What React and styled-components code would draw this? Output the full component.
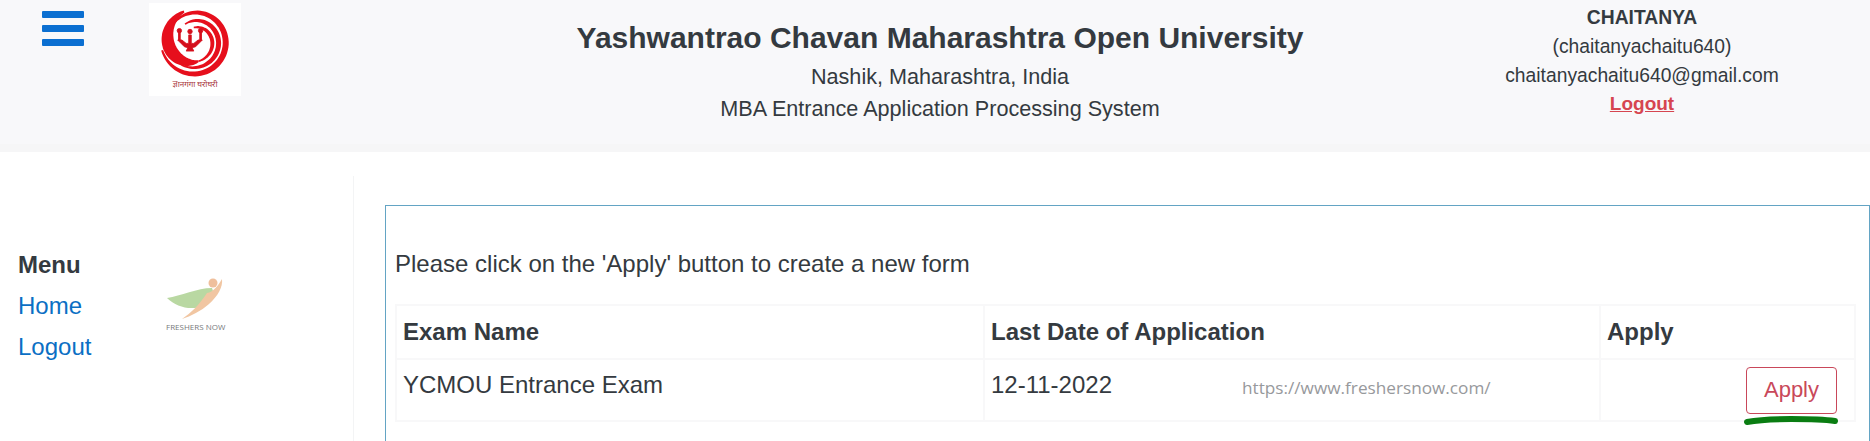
import React from "react";
import styled, { createGlobalStyle } from "styled-components";

const GlobalStyle = createGlobalStyle`
  html, body {
    margin: 0;
    height: 441px;
    overflow: hidden;
    background: #fff;
    font-family: "Liberation Sans", Arial, sans-serif;
    color: #343a40;
  }
`;

// tapered band along a spiral, angles in degrees clockwise from straight up
const ribbon = (a0, a1, r0, r1, w0, w1) => {
  const outer = [];
  const inner = [];
  for (let i = 0; i <= 60; i++) {
    const t = i / 60;
    const a = ((a0 + (a1 - a0) * t) * Math.PI) / 180;
    const r = r0 + (r1 - r0) * t;
    const w = (w0 + (w1 - w0) * Math.sin(Math.PI * t)) / 2;
    const x = Math.sin(a);
    const y = -Math.cos(a);
    outer.push(`${(46 + x * (r + w)).toFixed(1)} ${(38.5 + y * (r + w)).toFixed(1)}`);
    inner.unshift(`${(46 + x * (r - w)).toFixed(1)} ${(38.5 + y * (r - w)).toFixed(1)}`);
  }
  return `M${outer.join("L")}L${inner.join("L")}Z`;
};

const YcmouLogo = () => (
  <LogoBox>
    <svg width="92" height="93" viewBox="0 0 92 93">
      <g fill="#e60f1c">
        <path d={ribbon(-45, 255, 28, 34, 2, 6)} />
        <path d={ribbon(-30, 210, 20, 27, 1.5, 5)} />
        <path d={ribbon(-5, 170, 14, 20, 1.5, 4)} />
        <path d={ribbon(170, 340, 20, 32, 2, 13)} />
      </g>
      <g fill="#d40f1c" stroke="#d40f1c" strokeWidth="1" transform="translate(41 37) scale(.85) translate(-45.5 -37)">
        <path d="M31 37 L36 37 L41 41 L44 41 L44 31 L47 31 L47 41 L50 41 L55 37 L60 37 L52 45 L48 46 L50 50 L41 50 L43 46 L39 45 Z" />
        <rect x="32" y="28" width="2" height="9" />
        <rect x="57" y="28" width="2" height="9" />
        <circle cx="33" cy="26" r="2.6" />
        <circle cx="45.5" cy="27" r="2.6" />
        <circle cx="58" cy="26" r="2.6" />
      </g>
      <text x="46" y="84" textAnchor="middle" fontFamily="Noto Sans" fontSize="8" fill="#a8343a">
        ज्ञानगंगा घरोघरी
      </text>
    </svg>
  </LogoBox>
);

const FreshersLogo = () => (
  <FreshersBox>
    <svg width="58" height="47" viewBox="0 0 58 47">
      <circle cx="46" cy="10" r="4.5" fill="#efbf9c" />
      <path d="M0 25 C14 23 30 15 45 15 C48 21 44 28 38 32 C26 38 10 35 0 25 Z" fill="#b9d8a2" />
      <path d="M55 6 C56 14 51 23 42 31 C34 38 24 43 15 46 C24 40 33 31 40 20 C46 19 51 13 55 6 Z" fill="#f1c6a2" />
    </svg>
    <FreshersName>FRESHERS NOW</FreshersName>
  </FreshersBox>
);

const App = () => (
  <>
    <GlobalStyle />
    <Header>
      <Burger aria-label="Menu">
        <span />
        <span />
        <span />
      </Burger>
      <YcmouLogo />
      <Heading>
        <Title>Yashwantrao Chavan Maharashtra Open University</Title>
        <SubTitle>Nashik, Maharashtra, India</SubTitle>
        <SubTitle>MBA Entrance Application Processing System</SubTitle>
      </Heading>
      <UserBox>
        <UserName>CHAITANYA</UserName>
        <UserLine>(chaitanyachaitu640)</UserLine>
        <UserLine>chaitanyachaitu640@gmail.com</UserLine>
        <LogoutLink href="#">Logout</LogoutLink>
      </UserBox>
    </Header>
    <Main>
      <Sidebar>
        <Menu>
          <MenuTitle>Menu</MenuTitle>
          <MenuLink href="#">Home</MenuLink>
          <MenuLink href="#">Logout</MenuLink>
        </Menu>
        <FreshersLogo />
      </Sidebar>
      <Content>
        <Panel>
          <Intro>Please click on the 'Apply' button to create a new form</Intro>
          <Table>
            <colgroup>
              <col width="588" />
              <col width="616" />
              <col />
            </colgroup>
            <thead>
              <tr>
                <Th>Exam Name</Th>
                <Th>Last Date of Application</Th>
                <Th>Apply</Th>
              </tr>
            </thead>
            <tbody>
              <tr>
                <Td>YCMOU Entrance Exam</Td>
                <Td>12-11-2022</Td>
                <ApplyCell>
                  <ApplyButton>Apply</ApplyButton>
                  <Scribble width="96" height="12" viewBox="0 0 96 12">
                    <path d="M4 7 C20 4 34 4 48 4 C62 4 78 4 92 6" fill="none" stroke="#0a7d12" strokeWidth="6" strokeLinecap="round" />
                  </Scribble>
                </ApplyCell>
              </tr>
            </tbody>
          </Table>
          <Watermark>https://www.freshersnow.com/</Watermark>
        </Panel>
      </Content>
    </Main>
  </>
);

export default App;

const Header = styled.header`
  display: flex;
  align-items: flex-start;
  box-sizing: border-box;
  height: 152px;
  background: #f8f8fa;
  border-bottom: 8px solid #f6f6f7;
`;

const Burger = styled.button`
  display: flex;
  flex-direction: column;
  gap: 7px;
  width: 42px;
  margin: 11px 0 0 42px;
  padding: 0;
  border: 0;
  background: none;

  span {
    height: 7px;
    border-radius: 1px;
    background: #0b6fd1;
  }
`;

const LogoBox = styled.div`
  width: 92px;
  height: 93px;
  margin: 3px 0 0 65px;
  background: #fff;

  svg {
    display: block;
  }
`;

const Heading = styled.div`
  width: 924px;
  margin-left: 237px;
  text-align: center;
  padding-top: 19px;
`;

const Title = styled.h1`
  margin: 0 0 4px;
  font-size: 30px;
  line-height: 38px;
  font-weight: 700;
  color: #343a40;
`;

const SubTitle = styled.div`
  font-size: 21.6px;
  line-height: 32px;
`;

const UserBox = styled.div`
  display: flex;
  flex-direction: column;
  align-items: center;
  width: 400px;
  margin-left: 40px;
  padding-top: 4px;
  font-size: 19.3px;
`;

const UserName = styled.div`
  font-weight: 700;
  line-height: 28px;
`;

const UserLine = styled.div`
  line-height: 29px;
`;

const LogoutLink = styled.a`
  color: #d64550;
  font-weight: 700;
  font-size: 19px;
  line-height: 28px;
`;

const Main = styled.main`
  display: flex;
  align-items: flex-start;
`;

const Sidebar = styled.aside`
  display: flex;
  align-items: flex-start;
  box-sizing: border-box;
  width: 354px;
  height: 265px;
  margin-top: 24px;
  padding: 68px 0 0 18px;
  border-right: 1px solid #f3f4f5;
`;

const Menu = styled.nav`
  display: flex;
  flex-direction: column;
  width: 148px;
  font-size: 24px;
  line-height: 41px;
`;

const MenuTitle = styled.div`
  font-weight: 700;
`;

const MenuLink = styled.a`
  color: #0b6fc4;
  text-decoration: none;
`;

const FreshersBox = styled.div`
  display: flex;
  flex-direction: column;
  align-items: center;
  padding-top: 29px;

  svg {
    display: block;
  }
`;

const FreshersName = styled.div`
  margin-top: 1px;
  font-family: "Open Sans", sans-serif;
  font-size: 8px;
  line-height: 11px;
  color: #77797c;
`;

const Content = styled.div`
  flex: 1;
  padding: 53px 0 0 31px;
`;

const Panel = styled.section`
  position: relative;
  box-sizing: border-box;
  height: 236px;
  padding: 0 13px 0 9px;
  border: 1px solid #63a4c4;
  border-bottom: 0;
`;

const Intro = styled.p`
  margin: 0;
  padding-top: 32px;
  font-size: 24px;
  line-height: 52px;
`;

const Table = styled.table`
  width: 100%;
  margin-top: 14px;
  table-layout: fixed;
  border-collapse: collapse;
  font-size: 24px;
`;

const Th = styled.th`
  box-sizing: border-box;
  height: 54px;
  padding: 0 6px;
  border: 2px solid #f8f8f9;
  text-align: left;
  font-weight: 700;
`;

const Td = styled.td`
  box-sizing: border-box;
  height: 62px;
  padding: 0 6px 10px;
  border: 2px solid #f8f8f9;
`;

const ApplyCell = styled(Td)`
  position: relative;
  padding: 0 17px 0 0;
  text-align: right;
`;

const ApplyButton = styled.button`
  display: inline-block;
  vertical-align: middle;
  width: 91px;
  height: 47px;
  padding: 0;
  border: 1px solid #c9485a;
  border-radius: 4px;
  background: #fff;
  color: #c9485a;
  font-family: inherit;
  font-size: 22px;
`;

const Scribble = styled.svg`
  position: absolute;
  right: 15px;
  bottom: -7px;
`;

const Watermark = styled.span`
  position: absolute;
  left: 856px;
  top: 170px;
  font-family: "Open Sans", sans-serif;
  font-size: 17.2px;
  color: #97999c;
`;
